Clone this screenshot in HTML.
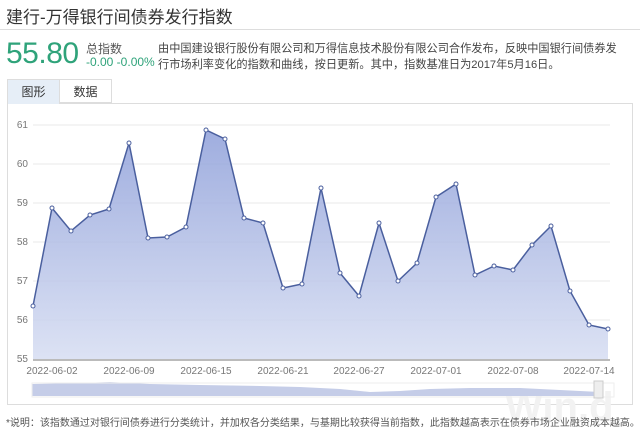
<!DOCTYPE html><html><head><meta charset="utf-8"><style>
body{margin:0;width:640px;height:435px;background:#fff;font-family:"Liberation Sans","Noto Sans CJK SC",sans-serif;overflow:hidden;position:relative}
.a{position:absolute;white-space:nowrap}
</style></head><body>
<div class="a" style="left:6px;top:3px;font-size:17px;color:#333">建行-万得银行间债券发行指数</div>
<div class="a" style="left:0;top:29px;width:640px;height:1px;background:#ddd"></div>
<div class="a" style="left:6px;top:37px;font-size:30px;color:#2fa37a;letter-spacing:-0.5px">55.80</div>
<div class="a" style="left:86px;top:40px;font-size:12px;color:#555">总指数</div>
<div class="a" style="left:86px;top:55px;font-size:12px;color:#2fa37a">-0.00 -0.00%</div>
<div class="a" style="left:158px;top:41px;font-size:11.2px;color:#444;line-height:16px">由中国建设银行股份有限公司和万得信息技术股份有限公司合作发布，反映中国银行间债券发<br>行市场利率变化的指数和曲线，按日更新。其中，指数基准日为2017年5月16日。</div>
<div class="a" style="left:7px;top:103px;width:626px;height:302px;border:1px solid #ddd;box-sizing:border-box"></div>
<div class="a" style="left:7px;top:79px;width:53px;height:25px;background:#e6eef7;border:1px solid #ddd;border-bottom:none;box-sizing:border-box;font-size:12px;color:#333;text-align:center;line-height:24px">图形</div>
<div class="a" style="left:60px;top:79px;width:52px;height:24px;background:#fff;border:1px solid #ddd;border-left:none;box-sizing:border-box;font-size:12px;color:#333;text-align:center;line-height:24px">数据</div>
<svg class="a" style="left:0;top:0" width="640" height="435">
<defs><linearGradient id="g" x1="0" y1="0" x2="0" y2="1"><stop offset="0" stop-color="#8e9fd9"/><stop offset="1" stop-color="#d6ddf2"/></linearGradient></defs>
<text x="505" y="420" font-size="40" font-weight="bold" fill="#f2f2f2" font-family="Liberation Sans">Win.d</text>
<g stroke="#e8e8e8" stroke-width="1">
<line x1="33" x2="610" y1="125" y2="125"/><line x1="33" x2="610" y1="164" y2="164"/><line x1="33" x2="610" y1="203" y2="203"/><line x1="33" x2="610" y1="242" y2="242"/><line x1="33" x2="610" y1="281" y2="281"/><line x1="33" x2="610" y1="320" y2="320"/></g>
<g font-size="10" fill="#777" font-family="Liberation Sans" text-anchor="end">
<text x="28" y="128">61</text><text x="28" y="167">60</text><text x="28" y="206">59</text><text x="28" y="245">58</text><text x="28" y="284">57</text><text x="28" y="323">56</text><text x="28" y="362">55</text></g>
<path d="M33,306L52,208L71,231L90,215L109,209L129,143L148,238L167,237L186,227L206,130L225,139L244,218L263,223L283,288L302,284L321,188L340,273L359,296L379,223L398,281L417,263L436,197L456,184L475,275L494,266L513,270L532,245L551,226L570,291L589,325L608,329L608,359L33,359Z" fill="url(#g)" opacity="0.85"/>
<path d="M33,306L52,208L71,231L90,215L109,209L129,143L148,238L167,237L186,227L206,130L225,139L244,218L263,223L283,288L302,284L321,188L340,273L359,296L379,223L398,281L417,263L436,197L456,184L475,275L494,266L513,270L532,245L551,226L570,291L589,325L608,329" fill="none" stroke="#4a5f9e" stroke-width="1.5"/>
<g fill="#fff" stroke="#4a5f9e" stroke-width="1">
<circle cx="33" cy="306" r="2"/><circle cx="52" cy="208" r="2"/><circle cx="71" cy="231" r="2"/><circle cx="90" cy="215" r="2"/><circle cx="109" cy="209" r="2"/><circle cx="129" cy="143" r="2"/><circle cx="148" cy="238" r="2"/><circle cx="167" cy="237" r="2"/><circle cx="186" cy="227" r="2"/><circle cx="206" cy="130" r="2"/><circle cx="225" cy="139" r="2"/><circle cx="244" cy="218" r="2"/><circle cx="263" cy="223" r="2"/><circle cx="283" cy="288" r="2"/><circle cx="302" cy="284" r="2"/><circle cx="321" cy="188" r="2"/><circle cx="340" cy="273" r="2"/><circle cx="359" cy="296" r="2"/><circle cx="379" cy="223" r="2"/><circle cx="398" cy="281" r="2"/><circle cx="417" cy="263" r="2"/><circle cx="436" cy="197" r="2"/><circle cx="456" cy="184" r="2"/><circle cx="475" cy="275" r="2"/><circle cx="494" cy="266" r="2"/><circle cx="513" cy="270" r="2"/><circle cx="532" cy="245" r="2"/><circle cx="551" cy="226" r="2"/><circle cx="570" cy="291" r="2"/><circle cx="589" cy="325" r="2"/><circle cx="608" cy="329" r="2"/></g>
<line x1="33" x2="610" y1="360" y2="360" stroke="#bbb" stroke-width="2"/>
<g font-size="10" fill="#777" font-family="Liberation Sans" text-anchor="middle">
<text x="52" y="374">2022-06-02</text><text x="129" y="374">2022-06-09</text><text x="206" y="374">2022-06-15</text><text x="283" y="374">2022-06-21</text><text x="359" y="374">2022-06-27</text><text x="436" y="374">2022-07-01</text><text x="513" y="374">2022-07-08</text><text x="589" y="374">2022-07-14</text></g>
<path d="M32,384L80,383L110,382L150,384L200,385L260,386L300,387L340,389L370,392L400,391L430,389L470,388L520,388L560,390L600,392L600,396L32,396Z" fill="#c5cde8"/>
<rect x="32" y="383" width="582" height="14" fill="none" stroke="#eee"/>
<rect x="594" y="381" width="9" height="17" fill="#eee" stroke="#ccc"/>
</svg>
<div class="a" style="left:6px;top:414px;font-size:10px;color:#555">*说明：该指数通过对银行间债券进行分类统计，并加权各分类结果，与基期比较获得当前指数，此指数越高表示在债券市场企业融资成本越高。</div>
</body></html>
